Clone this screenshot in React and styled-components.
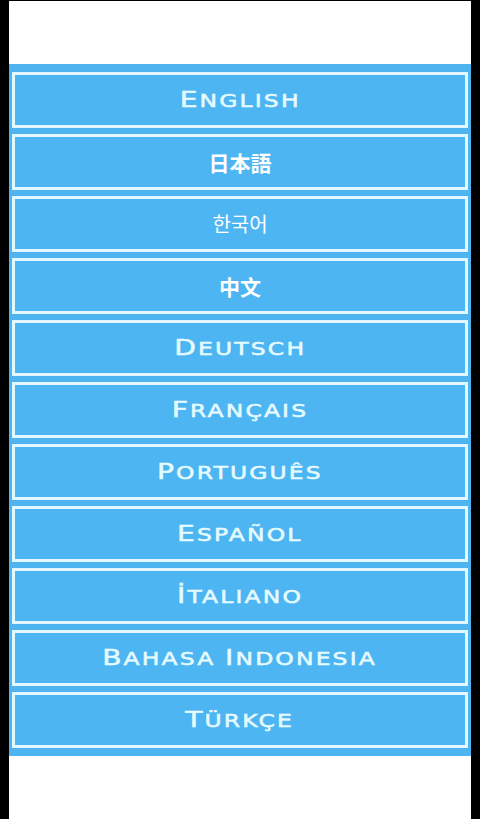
import React from 'react';
import styled, { createGlobalStyle } from 'styled-components';

const languages = [
  { label: 'English' },
  { label: '日本語', cjk: 'jp' },
  { label: '한국어', cjk: 'kr' },
  { label: '中文', cjk: 'sc' },
  { label: 'Deutsch' },
  { label: 'Français' },
  { label: 'Português' },
  { label: 'Español' },
  { label: 'İtaliano' },
  { label: 'Bahasa Indonesia' },
  { label: 'Türkçe' }
];

const GlobalStyle = createGlobalStyle`
  html, body {
    margin: 0;
    padding: 0;
    background: #000;
  }
  * {
    box-sizing: border-box;
  }
`;

const Screen = styled.div`
  margin: 1px 9px 0;
  height: 818px;
  background: #ffffff;
  display: flex;
  flex-direction: column;
`;

const TopSpace = styled.div`
  height: 63px;
  flex: none;
`;

const Panel = styled.div`
  background: #4db4ef;
  padding: 8px 3px;
  display: flex;
  flex-direction: column;
  gap: 6px;
`;

const LanguageButton = styled.button`
  height: 56px;
  width: 100%;
  margin: 0;
  padding: 0;
  border: 3px solid #e2f7ff;
  background: #4db5f1;
  display: flex;
  align-items: center;
  justify-content: center;
  cursor: pointer;
`;

const Latin = styled.span`
  display: inline-block;
  font-family: "DejaVu Sans", sans-serif;
  color: #e6fbff;
  letter-spacing: 1.6px;
  white-space: pre;
  transform: scaleX(1.34);
  -webkit-text-stroke: 0.5px #e6fbff;
  line-height: 1;
`;

const Cap = styled.span`
  font-size: 21px;
`;

const Small = styled.span`
  font-size: 17.5px;
  text-transform: uppercase;
`;

const cjkFamilies = {
  jp: '"Noto Sans CJK JP"',
  kr: '"Noto Sans CJK KR"',
  sc: '"Noto Sans CJK SC"'
};

const Cjk = styled.span`
  font-family: ${(p) => cjkFamilies[p.$lang]}, sans-serif;
  font-size: ${(p) => (p.$lang === 'kr' ? '20px' : '21px')};
  font-weight: ${(p) => (p.$lang === 'kr' ? 400 : 700)};
  color: #ffffff;
  line-height: 1;
`;

function SmallCaps({ text }) {
  const words = text.split(' ');
  return (
    <Latin>
      {words.map((word, i) => (
        <React.Fragment key={i}>
          {i > 0 && <Small> </Small>}
          <Cap>{word.slice(0, 1)}</Cap>
          <Small>{word.slice(1)}</Small>
        </React.Fragment>
      ))}
    </Latin>
  );
}

export default function App() {
  return (
    <>
      <GlobalStyle />
      <Screen>
        <TopSpace />
        <Panel>
          {languages.map((lang) => (
            <LanguageButton key={lang.label}>
              {lang.cjk ? (
                <Cjk $lang={lang.cjk}>{lang.label}</Cjk>
              ) : (
                <SmallCaps text={lang.label} />
              )}
            </LanguageButton>
          ))}
        </Panel>
      </Screen>
    </>
  );
}
